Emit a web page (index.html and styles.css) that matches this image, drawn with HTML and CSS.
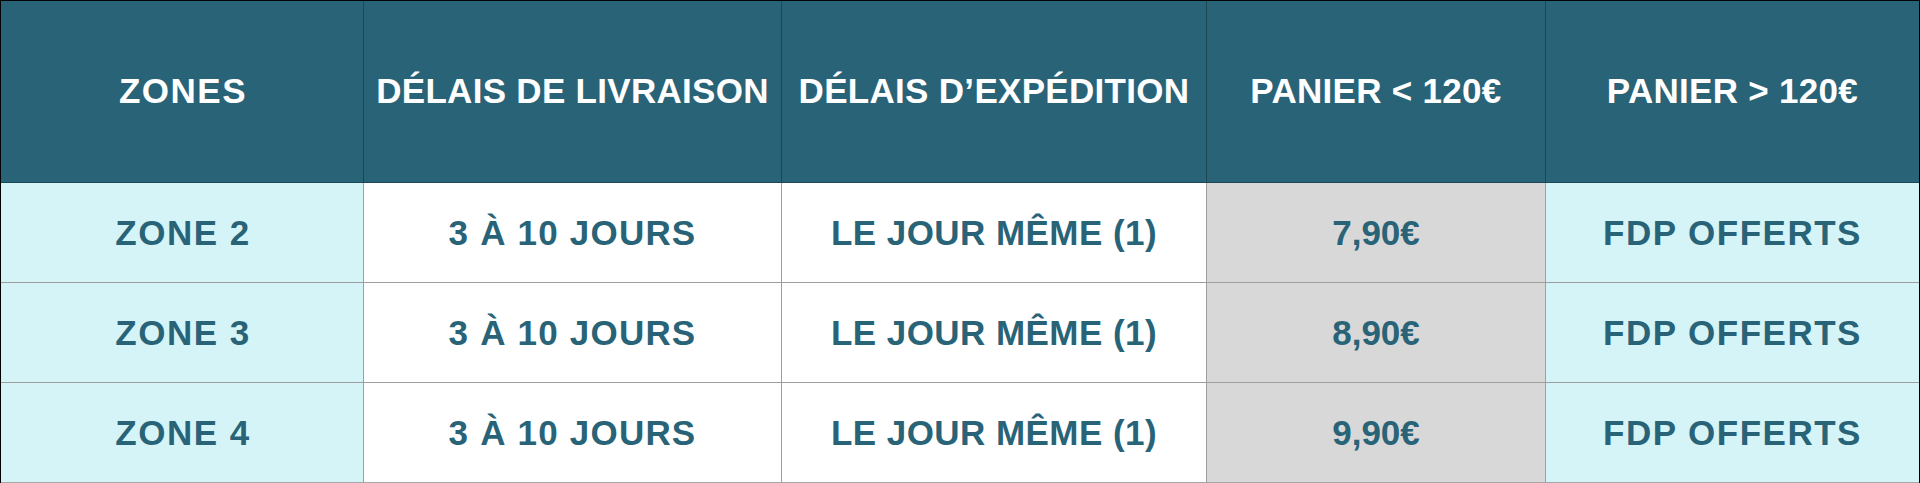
FILE: index.html
```html
<!DOCTYPE html>
<html lang="fr">
<head>
<meta charset="utf-8">
<title>Zones de livraison</title>
<link rel="stylesheet" href="styles.css">
</head>
<body>
<div class="table">
  <div class="cell head wide">ZONES</div>
  <div class="cell head">DÉLAIS DE LIVRAISON</div>
  <div class="cell head">DÉLAIS D’EXPÉDITION</div>
  <div class="cell head">PANIER &lt; 120€</div>
  <div class="cell head last">PANIER &gt; 120€</div>

  <div class="cell zone">ZONE 2</div>
  <div class="cell plain delay">3 À 10 JOURS</div>
  <div class="cell plain ship">LE JOUR MÊME (1)</div>
  <div class="cell price">7,90€</div>
  <div class="cell free last">FDP OFFERTS</div>

  <div class="cell zone">ZONE 3</div>
  <div class="cell plain delay">3 À 10 JOURS</div>
  <div class="cell plain ship">LE JOUR MÊME (1)</div>
  <div class="cell price">8,90€</div>
  <div class="cell free last">FDP OFFERTS</div>

  <div class="cell zone end">ZONE 4</div>
  <div class="cell plain delay end">3 À 10 JOURS</div>
  <div class="cell plain ship end">LE JOUR MÊME (1)</div>
  <div class="cell price end">9,90€</div>
  <div class="cell free last end">FDP OFFERTS</div>
</div>
</body>
</html>
```
FILE: styles.css
```css
html, body {
  margin: 0;
  padding: 0;
  background: #ffffff;
}

.table {
  width: 1920px;
  box-sizing: border-box;
  display: grid;
  grid-template-columns: 363px 418px 425px 339px 373px;
  grid-template-rows: 182px 100px 100px 101px;
  border-top: 1px solid #000;
  border-left: 1px solid #000;
  border-right: 1px solid #000;
  font-family: "Liberation Sans", Arial, sans-serif;
  font-weight: 700;
  font-size: 35px;
  color: #296377;
}

.cell {
  box-sizing: border-box;
  display: flex;
  align-items: center;
  justify-content: center;
  border-right: 1px solid #9e9e9e;
  border-bottom: 1px solid #9e9e9e;
  white-space: nowrap;
}

.cell.last {
  border-right: none;
}

.cell.end {
  border-bottom: 2px solid #a6a6a6;
}

.head {
  background: #296377;
  color: #ffffff;
  border-right-color: #1d4755;
  border-bottom: 1px solid #1d4755;
  padding-bottom: 1px;
  letter-spacing: 0.3px;
}

.head.wide {
  letter-spacing: 1.5px;
  padding-left: 2px;
}

.zone,
.free {
  background: #d5f4f8;
  letter-spacing: 1.5px;
}

.zone {
  padding-left: 2px;
}

.plain {
  background: #ffffff;
}

.delay {
  letter-spacing: 1.2px;
}

.ship {
  letter-spacing: 0.45px;
}

.price {
  background: #d8d8d8;
  letter-spacing: 0;
}
```
